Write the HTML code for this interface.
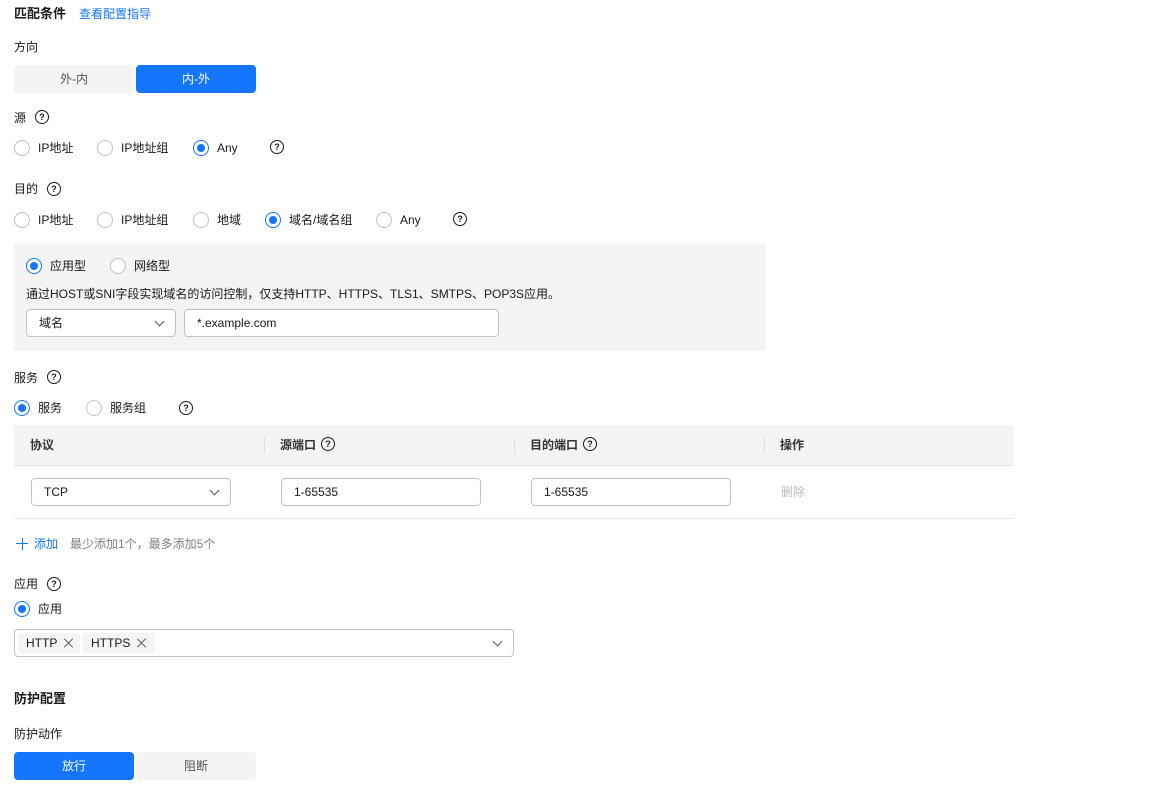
<!DOCTYPE html>
<html><head><meta charset="utf-8"><style>
body{margin:0;width:1150px;height:792px;background:#fff;position:relative;font-family:"Liberation Sans","Noto Sans CJK SC",sans-serif;font-size:12px;color:#191919;overflow:hidden}
.a{position:absolute;white-space:nowrap;line-height:16px}
.b{font-weight:bold;font-size:13px}
.r{position:absolute;width:14px;height:14px;border:1px solid #c2c2c2;border-radius:50%;box-sizing:content-box;background:#fff}
.r.on{border-color:#1476ff}
.r.on::after{content:"";position:absolute;left:3px;top:3px;width:8px;height:8px;border-radius:50%;background:#1476ff}
.q{position:absolute;width:12px;height:12px;border:1px solid #191919;border-radius:50%;font-size:9px;line-height:12px;text-align:center;font-weight:bold}
.seg{position:absolute;height:28px;line-height:28px;text-align:center;border-radius:4px;font-size:12px}
.in{position:absolute;height:26px;border:1px solid #c2c2c2;border-radius:4px;background:#fff;line-height:26px;box-sizing:content-box}
.in span{position:absolute;left:12px}
.chev{position:absolute;right:12px;top:8px;width:6px;height:6px;border-right:1.2px solid #555;border-bottom:1.2px solid #555;transform:rotate(45deg)}
.x{position:absolute;width:10px;height:10px}
.x::before,.x::after{content:"";position:absolute;left:4px;top:-1px;width:1.2px;height:12px;background:#555;transform:rotate(45deg)}
.x::after{transform:rotate(-45deg)}
</style></head><body>
<div class="a b" style="left:14px;top:6px">匹配条件</div>
<div class="a" style="left:79px;top:6px;color:#1476ff">查看配置指导</div>
<div class="a" style="left:14px;top:39px">方向</div>
<div class="seg" style="left:14px;top:65px;width:120px;background:#f4f4f4;color:#555">外-内</div>
<div class="seg" style="left:136px;top:65px;width:120px;background:#1476ff;color:#fff">内-外</div>

<div class="a" style="left:14px;top:110px">源</div><div class="q" style="left:35px;top:110px">?</div>
<div class="r" style="left:14px;top:140px"></div><div class="a" style="left:38px;top:140px">IP地址</div>
<div class="r" style="left:97px;top:140px"></div><div class="a" style="left:121px;top:140px">IP地址组</div>
<div class="r on" style="left:193px;top:140px"></div><div class="a" style="left:217px;top:140px">Any</div>
<div class="q" style="left:270px;top:140px">?</div>

<div class="a" style="left:14px;top:181px">目的</div><div class="q" style="left:47px;top:182px">?</div>
<div class="r" style="left:14px;top:212px"></div><div class="a" style="left:38px;top:212px">IP地址</div>
<div class="r" style="left:97px;top:212px"></div><div class="a" style="left:121px;top:212px">IP地址组</div>
<div class="r" style="left:193px;top:212px"></div><div class="a" style="left:217px;top:212px">地域</div>
<div class="r on" style="left:265px;top:212px"></div><div class="a" style="left:289px;top:212px">域名/域名组</div>
<div class="r" style="left:376px;top:212px"></div><div class="a" style="left:400px;top:212px">Any</div>
<div class="q" style="left:453px;top:212px">?</div>

<div style="position:absolute;left:14px;top:244px;width:751px;height:106px;background:#f4f4f4;box-shadow:0 0 3px rgba(0,0,0,0.05)"></div>
<div class="r on" style="left:26px;top:258px"></div><div class="a" style="left:50px;top:258px">应用型</div>
<div class="r" style="left:110px;top:258px"></div><div class="a" style="left:134px;top:258px">网络型</div>
<div class="a" style="left:26px;top:286px">通过HOST或SNI字段实现域名的访问控制，仅支持HTTP、HTTPS、TLS1、SMTPS、POP3S应用。</div>
<div class="in" style="left:26px;top:309px;width:148px"><span>域名</span><i class="chev"></i></div>
<div class="in" style="left:184px;top:309px;width:313px"><span>*.example.com</span></div>

<div class="a" style="left:14px;top:370px">服务</div><div class="q" style="left:47px;top:370px">?</div>
<div class="r on" style="left:14px;top:400px"></div><div class="a" style="left:38px;top:400px">服务</div>
<div class="r" style="left:86px;top:400px"></div><div class="a" style="left:110px;top:400px">服务组</div>
<div class="q" style="left:179px;top:401px">?</div>

<div style="position:absolute;left:14px;top:425px;width:1000px;height:40px;background:#f4f4f4;border-bottom:1px solid #e8e8e8"></div>
<div style="position:absolute;left:264px;top:437px;width:1px;height:16px;background:#ddd"></div>
<div style="position:absolute;left:514px;top:437px;width:1px;height:16px;background:#ddd"></div>
<div style="position:absolute;left:764px;top:437px;width:1px;height:16px;background:#ddd"></div>
<div class="a" style="left:30px;top:437px;font-weight:bold;color:#333">协议</div>
<div class="a" style="left:280px;top:437px;font-weight:bold;color:#333">源端口</div><div class="q" style="left:321px;top:437px">?</div>
<div class="a" style="left:530px;top:437px;font-weight:bold;color:#333">目的端口</div><div class="q" style="left:583px;top:437px">?</div>
<div class="a" style="left:780px;top:437px;font-weight:bold;color:#333">操作</div>
<div class="in" style="left:31px;top:478px;width:198px"><span>TCP</span><i class="chev"></i></div>
<div class="in" style="left:281px;top:478px;width:198px"><span>1-65535</span></div>
<div class="in" style="left:531px;top:478px;width:198px"><span>1-65535</span></div>
<div class="a" style="left:781px;top:484px;color:#bbb">删除</div>
<div style="position:absolute;left:14px;top:518px;width:1000px;height:1px;background:#e8e8e8"></div>

<div style="position:absolute;left:16px;top:543px;width:12px;height:1.3px;background:#1476ff"></div>
<div style="position:absolute;left:21.5px;top:537.5px;width:1.3px;height:12px;background:#1476ff"></div>
<div class="a" style="left:34px;top:536px;color:#1476ff">添加</div>
<div class="a" style="left:70px;top:536px;color:#808080">最少添加1个，最多添加5个</div>

<div class="a" style="left:14px;top:576px">应用</div><div class="q" style="left:47px;top:577px">?</div>
<div class="r on" style="left:14px;top:601px"></div><div class="a" style="left:38px;top:601px">应用</div>
<div class="in" style="left:14px;top:629px;width:498px">
<div style="position:absolute;left:3px;top:3px;height:20px;width:62px;background:#f4f4f4;border-radius:2px;line-height:20px"><span style="left:8px">HTTP</span><i class="x" style="left:46px;top:5px"></i></div>
<div style="position:absolute;left:68px;top:3px;height:20px;width:72px;background:#f4f4f4;border-radius:2px;line-height:20px"><span style="left:8px">HTTPS</span><i class="x" style="left:54px;top:5px"></i></div>
<i class="chev"></i></div>

<div class="a b" style="left:14px;top:691px">防护配置</div>
<div class="a" style="left:14px;top:726px">防护动作</div>
<div class="seg" style="left:14px;top:752px;width:120px;background:#1476ff;color:#fff">放行</div>
<div class="seg" style="left:136px;top:752px;width:120px;background:#f4f4f4;color:#555">阻断</div>
</body></html>
